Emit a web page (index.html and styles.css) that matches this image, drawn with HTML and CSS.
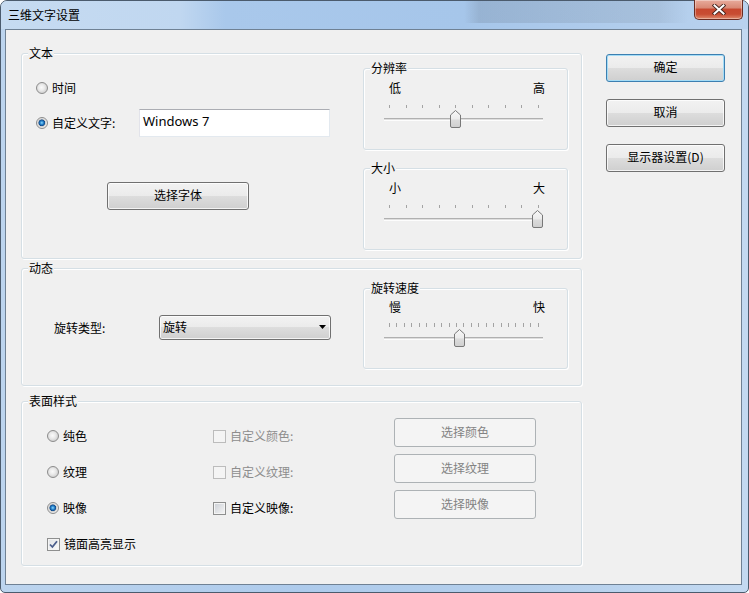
FILE: index.html
```html
<!DOCTYPE html>
<html lang="zh-CN">
<head>
    <meta charset="UTF-8">
    <title>三维文字设置</title>
    <link rel="stylesheet" href="styles.css">
</head>
<body>
    <svg class="defs" width="0" height="0">
        <defs>
            <linearGradient id="thumbFill" x1="0" y1="0" x2="0" y2="1">
                <stop offset="0" stop-color="#f7f7f7"/>
                <stop offset="0.5" stop-color="#ececec"/>
                <stop offset="0.55" stop-color="#dcdcdc"/>
                <stop offset="1" stop-color="#cfcfcf"/>
            </linearGradient>
        </defs>
    </svg>

    <div class="window">
        <div class="titlebar">
            <span class="title">三维文字设置</span>
            <button class="close-btn">
                <svg width="14" height="11" viewBox="0 0 14 11">
                    <path d="M2.5 1.5 L11.5 9.5 M11.5 1.5 L2.5 9.5" stroke="#45251d" stroke-width="3.8" stroke-linecap="square"/>
                    <path d="M2.5 1.5 L11.5 9.5 M11.5 1.5 L2.5 9.5" stroke="#fff" stroke-width="2" stroke-linecap="square"/>
                </svg>
            </button>
        </div>

        <div class="client">
            <div class="groups">
                <!-- 文本 -->
                <div class="group group-text">
                    <span class="group-title">文本</span>
                    <div class="text-left">
                        <label class="option"><span class="radio"></span>时间</label>
                        <div class="custom-row">
                            <label class="option custom-label"><span class="radio checked"></span>自定义文字:</label>
                            <div class="textbox">Windows 7</div>
                        </div>
                        <button class="btn font-btn">选择字体</button>
                    </div>
                    <div class="group-right">
                        <div class="subgroup">
                            <span class="group-title">分辨率</span>
                            <div class="scale-labels"><span>低</span><span>高</span></div>
                            <div class="ticks"><i></i><i></i><i></i><i></i><i></i><i></i><i></i><i></i><i></i><i></i></div>
                            <div class="track">
                                <svg class="thumb" style="left: 66px" width="11" height="18" viewBox="0 0 11 18"><path d="M0.5 5 L5.5 0.5 L10.5 5 V16 Q10.5 17.5 9 17.5 H2 Q0.5 17.5 0.5 16 Z" fill="url(#thumbFill)" stroke="#787878"/></svg>
                            </div>
                        </div>
                        <div class="subgroup">
                            <span class="group-title">大小</span>
                            <div class="scale-labels"><span>小</span><span>大</span></div>
                            <div class="ticks"><i></i><i></i><i></i><i></i><i></i><i></i><i></i><i></i><i></i><i></i></div>
                            <div class="track">
                                <svg class="thumb" style="left: 148px" width="11" height="18" viewBox="0 0 11 18"><path d="M0.5 5 L5.5 0.5 L10.5 5 V16 Q10.5 17.5 9 17.5 H2 Q0.5 17.5 0.5 16 Z" fill="url(#thumbFill)" stroke="#787878"/></svg>
                            </div>
                        </div>
                    </div>
                </div>

                <!-- 动态 -->
                <div class="group group-dyn">
                    <span class="group-title">动态</span>
                    <div class="dyn-left">
                        <span class="dyn-label">旋转类型:</span>
                        <div class="combo">
                            <span>旋转</span>
                            <svg width="7" height="4" viewBox="0 0 7 4"><path d="M0 0 H7 L3.5 4 Z" fill="#000"/></svg>
                        </div>
                    </div>
                    <div class="group-right dyn-right">
                        <div class="subgroup speed">
                            <span class="group-title">旋转速度</span>
                            <div class="scale-labels"><span>慢</span><span>快</span></div>
                            <div class="ticks"><i></i><i></i><i></i><i></i><i></i><i></i><i></i><i></i><i></i><i></i><i></i><i></i><i></i><i></i><i></i><i></i><i></i><i></i><i></i><i></i><i></i></div>
                            <div class="track">
                                <svg class="thumb" style="left: 70px" width="11" height="18" viewBox="0 0 11 18"><path d="M0.5 5 L5.5 0.5 L10.5 5 V16 Q10.5 17.5 9 17.5 H2 Q0.5 17.5 0.5 16 Z" fill="url(#thumbFill)" stroke="#787878"/></svg>
                            </div>
                        </div>
                    </div>
                </div>

                <!-- 表面样式 -->
                <div class="group group-surface">
                    <span class="group-title">表面样式</span>
                    <div class="surface">
                        <label class="option cell"><span class="radio"></span>纯色</label>
                        <label class="option cell disabled"><span class="check"></span>自定义颜色:</label>
                        <button class="btn" disabled>选择颜色</button>

                        <label class="option cell"><span class="radio"></span>纹理</label>
                        <label class="option cell disabled"><span class="check"></span>自定义纹理:</label>
                        <button class="btn" disabled>选择纹理</button>

                        <label class="option cell"><span class="radio checked"></span>映像</label>
                        <label class="option cell"><span class="check"></span>自定义映像:</label>
                        <button class="btn" disabled>选择映像</button>

                        <label class="option cell"><span class="check checked">
                            <svg width="11" height="11" viewBox="0 0 11 11"><path d="M2 5.5 L4.4 8 L9 2.2" stroke="#4a5d8c" stroke-width="1.8" fill="none"/></svg>
                        </span>镜面高亮显示</label>
                    </div>
                </div>
            </div>

            <div class="side-buttons">
                <button class="btn default">确定</button>
                <button class="btn">取消</button>
                <button class="btn">显示器设置(D)</button>
            </div>
        </div>
    </div>
</body>
</html>
```

FILE: styles.css
```css
* {
    box-sizing: border-box;
}

body {
    margin: 0;
    width: 749px;
    height: 593px;
    overflow: hidden;
    font-family: "Noto Sans CJK SC", "Microsoft YaHei", sans-serif;
    font-size: 12px;
    line-height: 14px;
    color: #000;
    background: #fff;
}

.defs {
    position: absolute;
}

.window {
    width: 749px;
    height: 593px;
    display: flex;
    flex-direction: column;
    border: 1px solid #4b5b6d;
    border-radius: 7px 7px 5px 5px;
    background: linear-gradient(to right, #bcd4ee, #aecbec 40%, #b4cfec 70%, #c3d9f1);
}

/* title bar */
.titlebar {
    height: 28px;
    display: flex;
    align-items: center;
    padding-left: 7px;
    border-radius: 6px 6px 0 0;
    background:
        linear-gradient(to right, transparent 62%, rgba(95, 110, 128, 0.22) 64%, rgba(110, 125, 140, 0.16) 88%, transparent 92%) top / 100% 22px no-repeat,
        linear-gradient(to right, #c6dbf1, #c0d7f0 24%, #a9c8eb 30%, #a6c6ea 62%, #b9d2ee 100%);
}

.close-btn {
    margin-left: auto;
    margin-right: 5px;
    align-self: flex-start;
    margin-top: -1px;
    width: 49px;
    height: 20px;
    padding: 0;
    display: flex;
    align-items: center;
    justify-content: center;
    border: 1px solid #6a2c22;
    border-top: none;
    border-radius: 0 0 5px 5px;
    background: linear-gradient(#e8ab9c, #d98a76 40%, #c7482f 50%, #c84d33 75%, #df8a6c);
    box-shadow: inset 0 0 0 1px rgba(255, 255, 255, 0.35);
}

/* client area */
.client {
    flex: 1;
    margin: 0 6px 7px 4px;
    border: 1px solid #6f8194;
    background: #f0f0f0;
    display: flex;
    gap: 24px;
    padding: 23px 0 0 15px;
}

.groups {
    width: 561px;
    display: flex;
    flex-direction: column;
}

.group,
.subgroup {
    position: relative;
    border: 1px solid #d5dfe5;
    border-radius: 3px;
    box-shadow: inset 1px 1px 0 #fff, 1px 1px 0 #fff;
}

.group-title {
    position: absolute;
    top: -8px;
    left: 6px;
    padding: 0 1px;
    background: #f0f0f0;
    white-space: nowrap;
}

.group-text {
    height: 206px;
    display: flex;
}

.group-dyn {
    height: 118px;
    margin-top: 9px;
    display: flex;
}

.group-surface {
    height: 165px;
    margin-top: 15px;
}

.group-right {
    width: 205px;
    margin-right: 13px;
    padding-top: 14px;
    display: flex;
    flex-direction: column;
    gap: 18px;
}

.dyn-right {
    padding-top: 19px;
}

/* options */
.option {
    display: flex;
    align-items: center;
    white-space: nowrap;
}

.radio {
    width: 12px;
    height: 12px;
    margin-right: 4px;
    border: 1px solid #8c8c8c;
    border-radius: 50%;
    background: radial-gradient(circle at 45% 45%, #fafafa 0, #ececec 35%, #d0d0d0 75%, #e8e8e8 100%);
    flex-shrink: 0;
}

.radio.checked {
    background: radial-gradient(circle at 48% 48%, #92d8fa 0, #2b8ad2 1.6px, #0f4a8c 3px, #c9c9c9 3.6px, #e6e6e6 4.5px, #f4f4f4 100%);
}

.check {
    width: 13px;
    height: 13px;
    margin-right: 4px;
    border: 1px solid #8e8f8f;
    background: linear-gradient(135deg, #cbcfd5, #f6f6f6);
    box-shadow: inset 0 0 0 1px #f4f4f4;
    display: flex;
    align-items: center;
    justify-content: center;
    flex-shrink: 0;
}

.check.checked {
    background: linear-gradient(135deg, #dfe2e6, #fbfbfb);
}

.disabled {
    color: #8d8d8d;
}

.disabled .check {
    border-color: #bcbcbc;
    background: #f4f4f4;
    box-shadow: none;
}

/* buttons */
.btn {
    font: inherit;
    color: #000;
    padding: 0 0 2px;
    height: 28px;
    border: 1px solid #707070;
    border-radius: 3px;
    background: linear-gradient(#f2f2f2 0%, #ebebeb 50%, #dddddd 50%, #cfcfcf 100%);
    box-shadow: inset 0 0 0 1px rgba(255, 255, 255, 0.75);
}

.btn.default {
    border-color: #3c7fb1;
    box-shadow: inset 0 0 0 1px #a4dcf6;
}

.btn:disabled {
    height: 29px;
    border-color: #adb2b5;
    background: #f4f4f4;
    color: #838383;
    box-shadow: none;
}

.side-buttons {
    width: 119px;
    margin-top: 1px;
    display: flex;
    flex-direction: column;
    gap: 17px;
}

/* 文本 */
.text-left {
    flex: 1;
    padding: 27px 0 0 14px;
}

.custom-row {
    display: flex;
    align-items: center;
    margin-top: 14px;
}

.custom-label {
    width: 103px;
}

.textbox {
    width: 191px;
    height: 28px;
    padding: 3px 3px 0;
    border: 1px solid;
    border-color: #abadb3 #e3e9ef #e3e9ef #e2e3ea;
    background: #fff;
    font-family: "Noto Sans", "Noto Sans CJK SC", sans-serif;
    font-size: 13px;
    line-height: 16px;
}

.font-btn {
    display: block;
    width: 142px;
    margin: 45px 0 0 71px;
}

/* sliders */
.subgroup {
    height: 82px;
}

.subgroup.speed {
    height: 81px;
}

.scale-labels {
    display: flex;
    justify-content: space-between;
    margin: 12px 22px 0 25px;
}

.ticks {
    display: flex;
    justify-content: space-between;
    margin: 10px 28px 0 25px;
    height: 3px;
}

.ticks i {
    width: 1px;
    background: #a3a3a3;
}

.speed .scale-labels {
    margin-top: 11px;
}

.speed .ticks {
    margin-top: 9px;
    height: 4px;
}

.track {
    position: relative;
    width: 159px;
    height: 3px;
    margin: 10px 0 0 20px;
    background: linear-gradient(#b0b0b0 0 34%, #dedede 34% 67%, #fdfdfd 67%);
}

.thumb {
    position: absolute;
    top: -8px;
}

/* 动态 */
.dyn-left {
    flex: 1;
    display: flex;
    align-items: center;
    padding-left: 32px;
}

.dyn-label {
    width: 105px;
    padding-top: 2px;
}

.combo {
    width: 172px;
    height: 25px;
    display: flex;
    align-items: center;
    justify-content: space-between;
    padding: 0 4px 1px 3px;
    border: 1px solid #707070;
    border-radius: 3px;
    background: linear-gradient(#f2f2f2 0%, #ebebeb 50%, #dddddd 50%, #cfcfcf 100%);
    box-shadow: inset 0 0 0 1px rgba(255, 255, 255, 0.75);
}

/* 表面样式 */
.surface {
    display: grid;
    grid-template-columns: 166px 181px 142px;
    grid-template-rows: repeat(4, 29px);
    row-gap: 7px;
    padding: 16px 0 0 25px;
}

.cell {
    align-self: start;
    padding-top: 11px;
}
```
